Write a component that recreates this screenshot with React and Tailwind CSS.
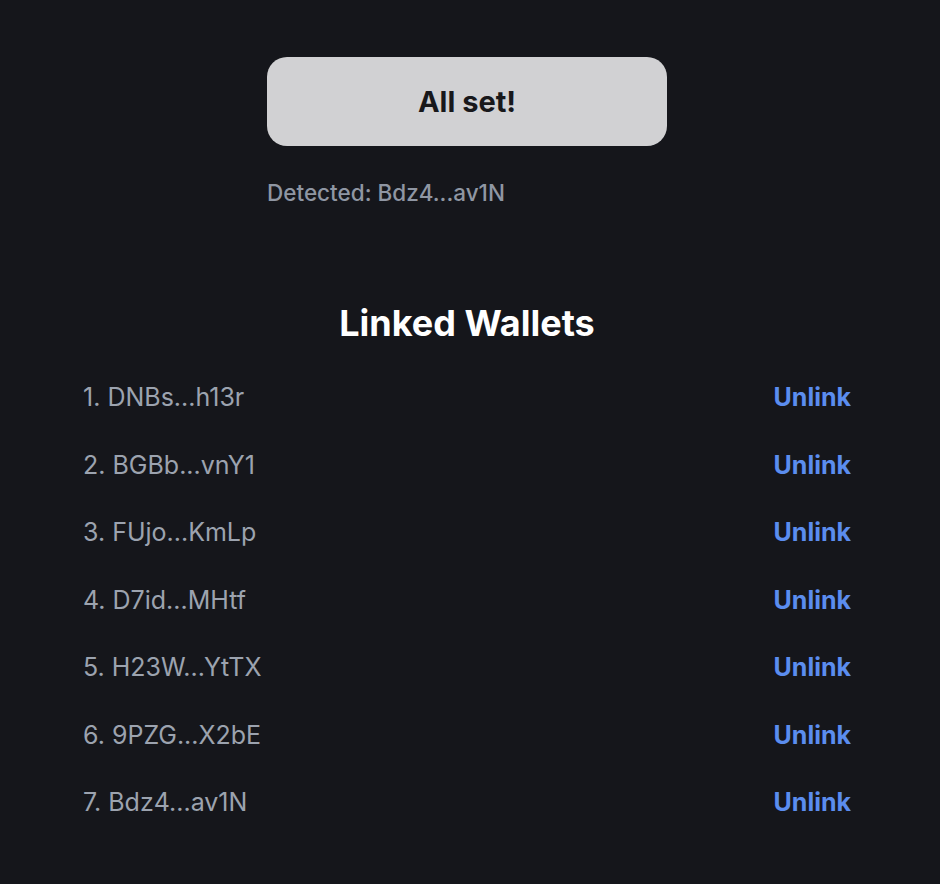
const wallets = [
  "DNBs...h13r",
  "BGBb...vnY1",
  "FUjo...KmLp",
  "D7id...MHtf",
  "H23W...YtTX",
  "9PZG...X2bE",
  "Bdz4...av1N",
];

export default function App() {
  return (
    <div className="min-h-[884px] bg-[#15161b] font-['Inter',sans-serif]">
      <div className="ml-[83px] w-[768px] pt-[57px]">
        <div className="flex flex-col items-center">
          <div className="w-[400px]">
            <button className="w-full h-[89px] rounded-[20px] bg-[#d1d1d3] text-[#18181b] text-[29px] font-bold">
              All set!
            </button>
            <p className="mt-[33px] text-[22.5px] leading-[28px] text-[#8f96a3] font-medium">Detected: Bdz4...av1N</p>
          </div>
        </div>

        <h2 className="mt-[98px] text-center text-[36px] font-bold text-white leading-none">Linked Wallets</h2>

        <ul className="mt-[23px]">
          {wallets.map((w, i) => (
            <li key={w} className="flex items-center justify-between h-[67.5px] text-[25px]">
              <span className="text-[#9ca3af]">{i + 1}. {w}</span>
              <button className="font-bold text-[#5b8def]">Unlink</button>
            </li>
          ))}
        </ul>
      </div>
    </div>
  );
}
